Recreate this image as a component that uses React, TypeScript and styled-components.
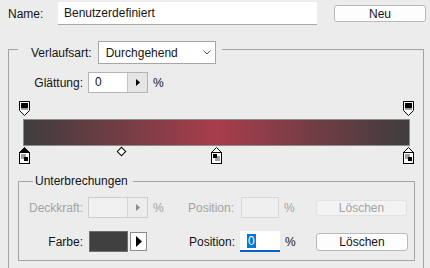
import styled, { createGlobalStyle } from 'styled-components';

const GlobalStyle = createGlobalStyle`
	html, body {
		margin: 0;
		padding: 0;
		background: #ececec;
	}
	body {
		font-family: 'Liberation Sans', Arial, sans-serif;
		font-size: 12px;
		color: #141414;
	}
`;

type Stop = { pos: number; selected?: boolean; swatch: 'fg' | 'bg' };

const COLOR_STOPS: Stop[] = [
	{ pos: 0, selected: true, swatch: 'fg' },
	{ pos: 50, swatch: 'bg' },
	{ pos: 100, swatch: 'fg' },
];
const OPACITY_STOPS = [0, 100];
const MIDPOINT = 25.3;

// pixel left for a stop of width 11, bar is 387 wide
const stopLeft = (p: number) => -4 + p * 3.84;

const OpacityStopIcon = () => (
	<svg width="11" height="16" viewBox="0 0 11 16">
		<path d="M0.5 0.5H10.5V9.5L5.5 14.5L0.5 9.5Z" fill="#fff" stroke="#000" />
		<rect x="2" y="2" width="7" height="5" fill="#000" />
		<rect x="2" y="7" width="7" height="2" fill="#a0a0a0" />
	</svg>
);

const ColorStopIcon = ({ selected, swatch }: { selected?: boolean; swatch: 'fg' | 'bg' }) => (
	<svg width="11" height="17" viewBox="0 0 11 17">
		<path d="M5.5 0.5L10.5 5.5H0.5Z" fill={selected ? '#000' : '#fff'} stroke="#000" />
		<rect x="0.5" y="5.5" width="10" height="11" fill="#fff" stroke="#000" />
		{swatch === 'fg' ? (
			<>
				<rect x="2" y="7" width="5" height="5" fill="#a0a0a0" />
				<rect x="5" y="10" width="4" height="4" fill="#000" />
			</>
		) : (
			<>
				<rect x="4" y="9" width="5" height="5" fill="#a0a0a0" />
				<rect x="2" y="7" width="4" height="4" fill="#000" />
			</>
		)}
	</svg>
);

const SmallArrow = ({ color }: { color: string }) => (
	<svg width="4" height="7" viewBox="0 0 4 7">
		<path d="M0 0L4 3.5L0 7Z" fill={color} />
	</svg>
);

export default function App() {
	return (
		<>
			<GlobalStyle />
			<Dialog>
				<TopRow>
					<Label $width={50} $align="left">
						Name:
					</Label>
					<NameInput>Benutzerdefiniert</NameInput>
					<Button $width={92} $height={17} $margin={17}>
						Neu
					</Button>
				</TopRow>

				<Group>
					<GroupHeader>
						<span>Verlaufsart:</span>
						<Select>
							Durchgehend
							<svg width="8" height="5" viewBox="0 0 8 5">
								<path d="M0.5 0.5L4 4L7.5 0.5" fill="none" stroke="#555" />
							</svg>
						</Select>
					</GroupHeader>

					<SmoothRow>
						<Label $width={74}>Glättung:</Label>
						<Spinner $width={60}>
							<SpinnerValue>0</SpinnerValue>
							<SpinnerArrow>
								<SmallArrow color="#000" />
							</SpinnerArrow>
						</Spinner>
						<Unit>%</Unit>
					</SmoothRow>

					<GradientEditor>
						<StopLane>
							{OPACITY_STOPS.map((p) => (
								<StopMarker key={p} style={{ left: stopLeft(p) }}>
									<OpacityStopIcon />
								</StopMarker>
							))}
						</StopLane>
						<GradientBar />
						<StopLane>
							{COLOR_STOPS.map((s) => (
								<StopMarker key={s.pos} style={{ left: stopLeft(s.pos), top: 1 }}>
									<ColorStopIcon selected={s.selected} swatch={s.swatch} />
								</StopMarker>
							))}
							<Midpoint style={{ left: 1 + MIDPOINT * 3.84 - 3.5 }} />
						</StopLane>
					</GradientEditor>

					<InnerGroup>
						<InnerHeader>Unterbrechungen</InnerHeader>

						<StopRow $top={9}>
							<Label $width={64} $disabled>
								Deckkraft:
							</Label>
							<Spinner $width={60} $disabled>
								<SpinnerValue />
								<SpinnerArrow $disabled>
									<SmallArrow color="#8a8a8a" />
								</SpinnerArrow>
							</Spinner>
							<Unit $disabled $width={17}>
								%
							</Unit>
							<Label $width={64} $disabled>
								Position:
							</Label>
							<PosInput $width={38} $margin={7} $disabled />
							<Unit $disabled $width={32}>
								%
							</Unit>
							<Button $width={91} $height={16} $disabled>
								Löschen
							</Button>
						</StopRow>

						<StopRow $top={13}>
							<Label $width={64}>Farbe:</Label>
							<Swatch $color="#404040" />
							<ColorArrow>
								<svg width="6" height="11" viewBox="0 0 6 11">
									<path d="M0 0L6 5.5L0 11Z" fill="#000" />
								</svg>
							</ColorArrow>
							<Spacer $width={24} />
							<Label $width={64}>Position:</Label>
							<PosInput $width={40} $margin={5} $active>
								<Selected>0</Selected>
							</PosInput>
							<Unit $width={31}>%</Unit>
							<Button $width={92} $height={18}>
								Löschen
							</Button>
						</StopRow>
					</InnerGroup>
				</Group>
			</Dialog>
		</>
	);
}

const Dialog = styled.div`
	width: 430px;
	height: 268px;
	overflow: hidden;
	background: #ececec;
	padding-top: 2px;
	box-sizing: border-box;
`;

const TopRow = styled.div`
	display: flex;
	align-items: center;
	height: 23px;
	padding-left: 8px;
`;

const Label = styled.span<{ $width: number; $align?: 'left' | 'right'; $disabled?: boolean }>`
	flex: none;
	width: ${(p) => p.$width}px;
	text-align: ${(p) => p.$align || 'right'};
	color: ${(p) => (p.$disabled ? '#a3a3a3' : '#141414')};
	margin-right: 5px;
	white-space: nowrap;
`;

const NameInput = styled.div`
	width: 259px;
	height: 23px;
	box-sizing: border-box;
	background: #fff;
	border-bottom: 1px solid #a8a8a8;
	padding-left: 6px;
	line-height: 22px;
	margin-left: -5px;
`;

const Button = styled.div<{ $width: number; $height: number; $margin?: number; $disabled?: boolean }>`
	flex: none;
	width: ${(p) => p.$width}px;
	height: ${(p) => p.$height}px;
	margin-left: ${(p) => p.$margin || 0}px;
	box-sizing: border-box;
	border: 1px solid ${(p) => (p.$disabled ? '#e2e2e2' : '#b9b9b9')};
	border-radius: 3px;
	background: ${(p) => (p.$disabled ? '#f3f3f3' : '#fdfdfd')};
	color: ${(p) => (p.$disabled ? '#a3a3a3' : '#141414')};
	display: flex;
	align-items: center;
	justify-content: center;
`;

const Group = styled.div`
	margin: 24px 0 0 8px;
	width: 416px;
	height: 240px;
	box-sizing: border-box;
	border: 1px solid #a3a3a3;
	border-bottom: none;
`;

const GroupHeader = styled.div`
	display: flex;
	align-items: center;
	gap: 6px;
	width: fit-content;
	height: 23px;
	margin: -9px 0 0 9px;
	padding: 0 6px 0 13px;
	background: #ececec;
`;

const Select = styled.div`
	width: 118px;
	height: 23px;
	box-sizing: border-box;
	background: #fff;
	border: 1px solid #a6a6a6;
	display: flex;
	align-items: center;
	justify-content: space-between;
	padding: 0 4px 0 7px;
`;

const SmoothRow = styled.div`
	display: flex;
	align-items: center;
	height: 21px;
	margin-top: 8px;
`;

const Spinner = styled.div<{ $width: number; $disabled?: boolean }>`
	flex: none;
	display: flex;
	width: ${(p) => p.$width}px;
	height: 21px;
	box-sizing: border-box;
	border: 1px solid ${(p) => (p.$disabled ? '#cdcdcd' : '#b4b4b4')};
	background: ${(p) => (p.$disabled ? '#f0f0f0' : '#fff')};
`;

const SpinnerValue = styled.div`
	flex: 1;
	padding-left: 6px;
	line-height: 19px;
`;

const SpinnerArrow = styled.div<{ $disabled?: boolean }>`
	width: 19px;
	border-left: 1px solid ${(p) => (p.$disabled ? '#d4d4d4' : '#c4c4c4')};
	background: ${(p) => (p.$disabled ? '#ececec' : '#e5e5e5')};
	display: flex;
	align-items: center;
	justify-content: center;
`;

const Unit = styled.span<{ $width?: number; $disabled?: boolean }>`
	flex: none;
	width: ${(p) => (p.$width ? `${p.$width}px` : 'auto')};
	margin-left: 5px;
	color: ${(p) => (p.$disabled ? '#a3a3a3' : '#141414')};
`;

const GradientEditor = styled.div`
	margin: 8px 0 0 14px;
	width: 387px;
`;

const StopLane = styled.div`
	position: relative;
	height: 18px;
`;

const StopMarker = styled.div`
	position: absolute;
	top: 0;
	line-height: 0;
`;

const Midpoint = styled.div`
	position: absolute;
	top: 2px;
	width: 5px;
	height: 5px;
	border: 1px solid #000;
	background: #fff;
	transform: rotate(45deg);
`;

const GradientBar = styled.div`
	height: 27px;
	box-sizing: border-box;
	border: 1px solid #8c8c8c;
	background: linear-gradient(to right, #3e3d3e 0%, #a83d4c 50%, #3e3d3e 100%);
`;

const InnerGroup = styled.div`
	margin: 17px 0 0 9px;
	width: 397px;
	height: 80px;
	box-sizing: border-box;
	border: 1px solid #a3a3a3;
`;

const InnerHeader = styled.div`
	width: fit-content;
	height: 14px;
	line-height: 14px;
	margin: -8px 0 0 14px;
	padding: 0 5px 0 2px;
	background: #ececec;
`;

const StopRow = styled.div<{ $top: number }>`
	display: flex;
	align-items: center;
	height: 21px;
	margin-top: ${(p) => p.$top}px;
`;

const PosInput = styled.div<{ $width: number; $margin: number; $disabled?: boolean; $active?: boolean }>`
	flex: none;
	width: ${(p) => p.$width}px;
	height: 21px;
	margin-left: ${(p) => p.$margin - 5}px;
	box-sizing: border-box;
	background: ${(p) => (p.$disabled ? '#efefef' : '#fff')};
	border: ${(p) => (p.$disabled ? '1px solid #d6d6d6' : 'none')};
	border-bottom: ${(p) => (p.$active ? '2px solid #0a64c8' : p.$disabled ? '1px solid #d6d6d6' : 'none')};
	padding: 3px 0 0 7px;
`;

const Selected = styled.span`
	background: #0078d7;
	color: #fff;
	padding: 0 1px;
`;

const Swatch = styled.div<{ $color: string }>`
	flex: none;
	width: 39px;
	height: 21px;
	box-sizing: border-box;
	margin-left: 1px;
	background: ${(p) => p.$color};
	border: 1px solid #6e6e6e;
`;

const ColorArrow = styled.div`
	flex: none;
	width: 17px;
	height: 19px;
	margin-left: 2px;
	box-sizing: border-box;
	border: 1px solid #8c8c8c;
	background: #fff;
	display: flex;
	align-items: center;
	justify-content: center;
`;

const Spacer = styled.div<{ $width: number }>`
	flex: none;
	width: ${(p) => p.$width}px;
`;
